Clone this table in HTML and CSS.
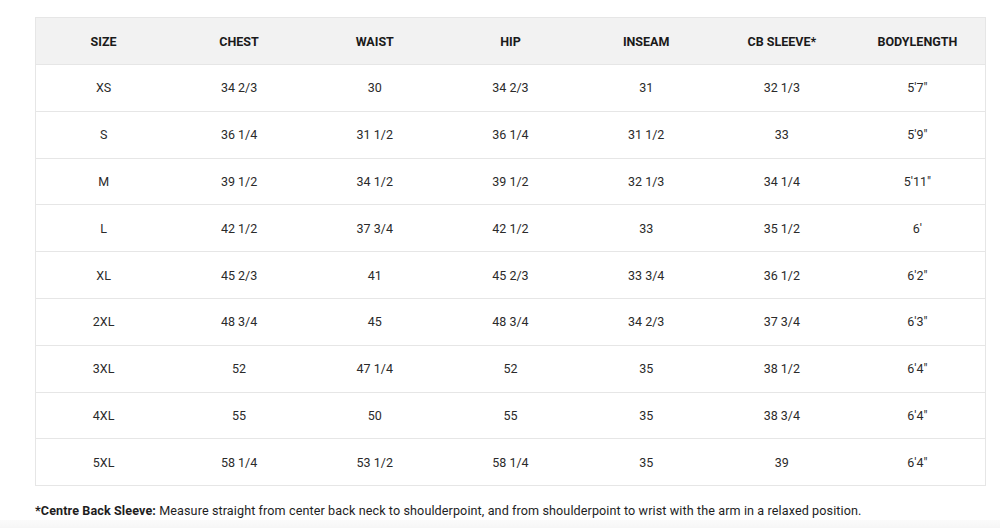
FILE: index.html
```html
<!DOCTYPE html>
<html>
<head>
<meta charset="utf-8">
<link rel="stylesheet" href="styles.css">
</head>
<body>
<div class="page">
  <table class="sizes">
    <thead>
      <tr><th>SIZE</th><th>CHEST</th><th>WAIST</th><th>HIP</th><th>INSEAM</th><th>CB SLEEVE*</th><th>BODYLENGTH</th></tr>
    </thead>
    <tbody>
      <tr><td>XS</td><td>34 2/3</td><td>30</td><td>34 2/3</td><td>31</td><td>32 1/3</td><td>5'7"</td></tr>
      <tr><td>S</td><td>36 1/4</td><td>31 1/2</td><td>36 1/4</td><td>31 1/2</td><td>33</td><td>5'9"</td></tr>
      <tr><td>M</td><td>39 1/2</td><td>34 1/2</td><td>39 1/2</td><td>32 1/3</td><td>34 1/4</td><td>5'11"</td></tr>
      <tr><td>L</td><td>42 1/2</td><td>37 3/4</td><td>42 1/2</td><td>33</td><td>35 1/2</td><td>6'</td></tr>
      <tr><td>XL</td><td>45 2/3</td><td>41</td><td>45 2/3</td><td>33 3/4</td><td>36 1/2</td><td>6'2"</td></tr>
      <tr><td>2XL</td><td>48 3/4</td><td>45</td><td>48 3/4</td><td>34 2/3</td><td>37 3/4</td><td>6'3"</td></tr>
      <tr><td>3XL</td><td>52</td><td>47 1/4</td><td>52</td><td>35</td><td>38 1/2</td><td>6'4"</td></tr>
      <tr><td>4XL</td><td>55</td><td>50</td><td>55</td><td>35</td><td>38 3/4</td><td>6'4"</td></tr>
      <tr><td>5XL</td><td>58 1/4</td><td>53 1/2</td><td>58 1/4</td><td>35</td><td>39</td><td>6'4"</td></tr>
    </tbody>
  </table>
  <p class="note"><strong>*Centre Back Sleeve:</strong> Measure straight from center back neck to shoulderpoint, and from shoulderpoint to wrist with the arm in a relaxed position.</p>
</div>
<div class="strip"></div>
</body>
</html>
```

FILE: styles.css
```css
html, body {
  margin: 0;
  padding: 0;
  background: #ffffff;
}
body {
  font-family: Roboto, "Liberation Sans", sans-serif;
  color: #222222;
  height: 528px;
  overflow: hidden;
  display: flex;
  flex-direction: column;
}
.page {
  padding: 17px 14px 0 35px;
  flex: 1;
}
.sizes {
  width: 951px;
  border-collapse: collapse;
  table-layout: fixed;
}
.sizes th,
.sizes td {
  border: 1px solid #e6e6e6;
  border-left: none;
  border-right: none;
  text-align: center;
  padding: 0;
}
.sizes th:first-child,
.sizes td:first-child {
  border-left: 1px solid #e6e6e6;
}
.sizes th:last-child,
.sizes td:last-child {
  border-right: 1px solid #e6e6e6;
}
.sizes th {
  background: #f2f2f2;
  height: 46px;
  font-size: 12.5px;
  font-weight: 700;
  color: #1a1a1a;
  letter-spacing: 0;
}
.sizes td {
  height: 45.8px;
  font-size: 12.5px;
  font-weight: 400;
  color: #2a2a2a;
}
.note {
  margin: 17px 0 0 0;
  font-size: 12.6px;
  color: #1e1e1e;
  letter-spacing: 0.1px;
}
.note strong {
  font-weight: 700;
}
.strip {
  height: 8px;
  background: linear-gradient(#fbfbfb, #f6f6f6);
}
```
